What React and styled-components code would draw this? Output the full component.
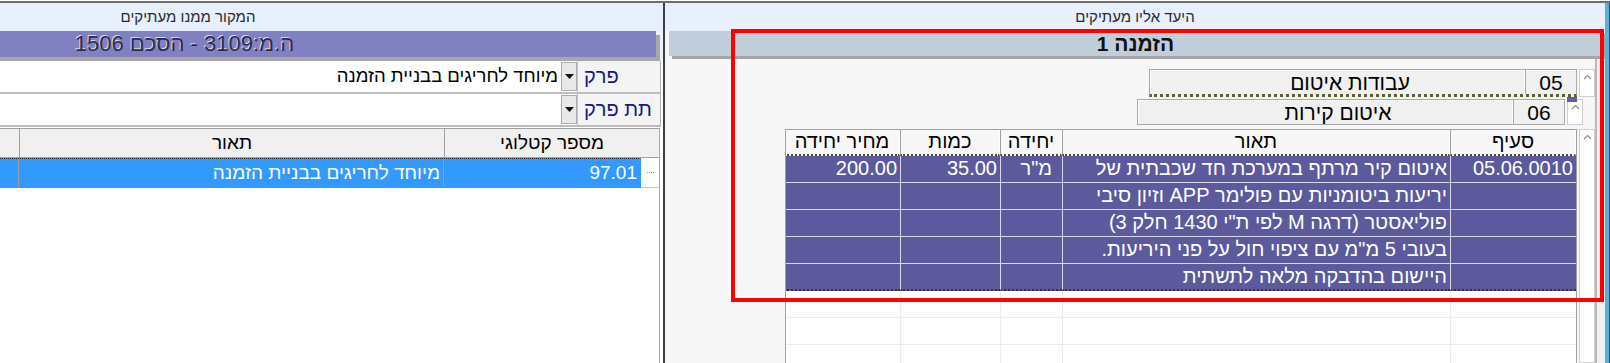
import React from 'react'
import styled, { createGlobalStyle } from 'styled-components'

const Global = createGlobalStyle`
  html, body {
    margin: 0;
    padding: 0;
    background: #fff;
  }
  body {
    font-family: "Liberation Sans", Arial, sans-serif;
  }
  * { box-sizing: border-box; }
`

const Screen = styled.div`
  position: relative;
  width: 1610px;
  height: 363px;
  overflow: hidden;
  background: #fff;
  direction: rtl;
`

const TopRule = styled.div`
  height: 3px;
  border-top: 1px solid #fff;
  background: #6e6e6e;
`

const Panels = styled.div`
  display: flex;
  height: 360px;
`

const EdgeStrip = styled.div`
  width: 5px;
  flex-shrink: 0;
  background: #57b2de;
  border-right: 1px solid #4a4a4a;
`

const Divider = styled.div`
  width: 2px;
  flex-shrink: 0;
  background: #3f3f3f;
`

/* ---------- source (left) panel ---------- */

const SourcePanel = styled.div`
  flex: 1;
  overflow: hidden;
  display: flex;
  flex-direction: column;
  align-items: flex-start;
  background: #fff;
`

const SourceInner = styled.div`
  width: 950px;
  flex-shrink: 0;
  height: 100%;
  display: flex;
  flex-direction: column;
`

const PanelTitle = styled.div`
  height: 28px;
  flex-shrink: 0;
  background: #e8effd;
  color: #2a2a2a;
  font-size: 15px;
  line-height: 28px;
  text-align: center;
`

const BarZone = styled.div`
  height: ${p => p.$h}px;
  flex-shrink: 0;
  background: ${p => p.$bg};
  padding-right: ${p => p.$right}px;
  padding-left: ${p => p.$left}px;
`

const SourceBar = styled.div`
  height: 26px;
  background: #8181c1;
  box-shadow: 4px 4px 0 #a8a8a8;
  color: #2c2c4a;
  font-size: 22px;
  line-height: 26px;
  text-align: center;
  text-shadow: -1px -1px 0 rgba(255, 255, 255, 0.7);
`

const FilterRow = styled.div`
  display: flex;
  height: 33px;
  flex-shrink: 0;
  border-bottom: 2px solid #bdbdbd;
  margin-right: 2px;
`

const FilterLabel = styled.div`
  width: 84px;
  flex-shrink: 0;
  background: #f4f4f4;
  border-left: 1px solid #c4c4c4;
  border-right: 1px solid #b0b0b0;
  color: #17177c;
  font-size: 20px;
  line-height: 30px;
  text-align: left;
  padding-left: 6px;
`

const ArrowButton = styled.div`
  width: 16px;
  flex-shrink: 0;
  margin: 1px 0;
  background: #e9e9e9;
  border: 1px solid #adadad;
  display: flex;
  align-items: center;
  justify-content: center;
`

const FilterInput = styled.div`
  flex: 1;
  background: #fff;
  font-size: 18.5px;
  line-height: 30px;
  color: #000;
  padding-right: 3px;
  text-align: right;
`

const SourceGrid = styled.div`
  flex: 1;
  margin-top: 1px;
  margin-right: 3px;
  border-right: 1px solid #a8a8a8;
  border-top: 1px solid #a0a0a0;
  background: #fff;
  display: flex;
  flex-direction: column;
`

const SourceHead = styled.div`
  display: grid;
  grid-template-columns: 215px 425px 1fr;
  height: 29px;
  background: #f0f0f0;
  border-bottom: 1px solid #a0a0a0;
`

const SourceHeadCell = styled.div`
  border-left: 1px solid #a0a0a0;
  font-size: 19px;
  line-height: 28px;
  text-align: center;
  color: #000;
`

const SourceRowWrap = styled.div`
  display: flex;
  height: 30px;
`

const RowGutter = styled.div`
  width: 18px;
  flex-shrink: 0;
  border-bottom: 1px solid #c4c4c4;
  display: flex;
  align-items: center;
  justify-content: center;
  &::before {
    content: '';
    width: 7px;
    border-top: 1px dotted #9a9a9a;
  }
`

const SourceRow = styled.div`
  flex: 1;
  display: grid;
  grid-template-columns: 197px 425px 1fr;
  background: #3399ff;
  border-top: 1px dotted #2a2a2a;
  border-bottom: 1px dotted #c47a30;
  border-right: 1px dotted #c47a30;
`

const SourceCell = styled.div`
  border-left: 1px solid #9a9aa8;
  color: #fff;
  font-size: 19px;
  line-height: 27px;
  padding-right: 3px;
  text-align: right;
  white-space: nowrap;
  overflow: hidden;
`

/* ---------- target (right) panel ---------- */

const TargetPanel = styled.div`
  width: 940px;
  flex-shrink: 0;
  display: flex;
  flex-direction: column;
  background: #f7f7f7;
`

const OrderBar = styled.div`
  height: 25px;
  background: #c0cdda;
  box-shadow: 3px 3px 0 #a6a6a6;
  color: #111;
  font-size: 21px;
  font-weight: bold;
  line-height: 25px;
  text-align: center;
`

const TargetBody = styled.div`
  flex: 1;
  display: flex;
  min-height: 0;
`

const Gutter = styled.div`
  width: 10px;
  flex-shrink: 0;
  background: #f1f1f1;
  border-left: 2px solid #b8b8b8;
`

const TargetMain = styled.div`
  flex: 1;
  display: flex;
  flex-direction: column;
  align-items: flex-start;
  padding-top: 10px;
  min-height: 0;
`

const LevelRow = styled.div`
  display: flex;
  gap: 2px;
  height: ${p => p.$h}px;
  margin-right: ${p => p.$indent}px;
  margin-bottom: ${p => p.$gap}px;
`

const ScrollStub = styled.div`
  width: 16px;
  flex-shrink: 0;
  background: #fff;
  border: 1px solid #cfcfcf;
  display: flex;
  justify-content: center;
  padding-top: 4px;
`

const LevelBox = styled.div`
  position: relative;
  width: 428px;
  display: flex;
  background: #f0f0f0;
  border: 1px solid #a9a9a9;
  box-shadow: inset 1px 1px 0 #fff;
  border-bottom: ${p => (p.$focused ? '3px dotted #5e5e2e' : '1px solid #a9a9a9')};

  &::after {
    content: '';
    display: ${p => (p.$focused ? 'block' : 'none')};
    position: absolute;
    right: -1px;
    bottom: -8px;
    width: 10px;
    height: 5px;
    background: #5f5fa8;
  }
`

const LevelNum = styled.div`
  width: 51px;
  flex-shrink: 0;
  border-left: 1px solid #a9a9a9;
  font-size: 21px;
  line-height: 25px;
  text-align: center;
`

const LevelName = styled.div`
  flex: 1;
  font-size: 21px;
  line-height: 25px;
  text-align: center;
  padding-left: 26px;
  border-right: 1px solid #fff;
`

const TableRow = styled.div`
  display: flex;
  gap: 2px;
  flex: 1;
  min-height: 0;
`

const Table = styled.div`
  width: 792px;
  display: grid;
  grid-template-columns: 126px 388px 62px 100px 116px;
  grid-template-rows: 26px;
  grid-auto-rows: 27px;
  align-content: start;
  background: #fff;
  border: 1px solid #a0a0a0;
  border-bottom: none;
  overflow: hidden;
`

const HeadCell = styled.div`
  background: #f7f7f7;
  border-left: 1px solid #a0a0a0;
  border-right: 1px solid #fff;
  border-bottom: 2px dotted #4b4b2b;
  font-size: 20px;
  line-height: 23px;
  text-align: center;
  color: #000;
  white-space: nowrap;
`

const Cell = styled.div`
  background: ${p => (p.$filled ? '#5c5a9c' : '#fff')};
  color: #fff;
  border-left: 1px solid ${p => (p.$filled ? '#d9d9ea' : '#ececec')};
  border-bottom: ${p =>
    p.$last ? '2px dotted #333' : `1px solid ${p.$filled ? '#d9d9ea' : '#ececec'}`};
  font-size: 20px;
  line-height: 25px;
  padding-right: ${p => p.$pad || 3}px;
  text-align: right;
  white-space: nowrap;
  overflow: hidden;
`

const Annotation = styled.div`
  position: absolute;
  left: 731px;
  top: 29px;
  width: 873px;
  height: 273px;
  border: 4px solid #ff0000;
  pointer-events: none;
`

const Chevron = () => (
  <svg width="9" height="6" viewBox="0 0 9 6">
    <polyline points="1,5 4.5,1.5 8,5" fill="none" stroke="#8c8c8c" strokeWidth="1.1" />
  </svg>
)

const DownArrow = () => (
  <svg width="9" height="5" viewBox="0 0 9 5">
    <polygon points="0,0 9,0 4.5,5" fill="#111" />
  </svg>
)

const lines = [
  { code: '05.06.0010', text: 'איטום קיר מרתף במערכת חד שכבתית של', unit: 'מ"ר', qty: '35.00', price: '200.00' },
  { text: 'יריעות ביטומניות עם פולימר APP וזיון סיבי' },
  { text: 'פוליאסטר (דרגה M לפי ת"י 1430 חלק 3)' },
  { text: 'בעובי 5 מ"מ עם ציפוי חול על פני היריעות.' },
  { text: 'היישום בהדבקה מלאה לתשתית' },
]

const columns = ['סעיף', 'תאור', 'יחידה', 'כמות', 'מחיר יחידה']

const App = () => (
  <>
    <Global />
    <Screen>
      <TopRule />
      <Panels>
        <EdgeStrip />
        <TargetPanel>
          <PanelTitle>היעד אליו מעתיקים</PanelTitle>
          <BarZone $h={28} $bg="#f7f7f7" $left={4} $right={3}>
            <OrderBar>הזמנה 1</OrderBar>
          </BarZone>
          <TargetBody>
            <Gutter />
            <TargetMain>
              <LevelRow $h={28} $indent={0} $gap={2}>
                <ScrollStub><Chevron /></ScrollStub>
                <LevelBox $focused>
                  <LevelNum>05</LevelNum>
                  <LevelName>עבודות איטום</LevelName>
                </LevelBox>
              </LevelRow>
              <LevelRow $h={26} $indent={12} $gap={4}>
                <ScrollStub><Chevron /></ScrollStub>
                <LevelBox>
                  <LevelNum>06</LevelNum>
                  <LevelName>איטום קירות</LevelName>
                </LevelBox>
              </LevelRow>
              <TableRow>
                <ScrollStub><Chevron /></ScrollStub>
                <Table>
                  {columns.map(c => (
                    <HeadCell key={c}>{c}</HeadCell>
                  ))}
                  {lines.map((l, i) => (
                    <React.Fragment key={i}>
                      <Cell $filled $last={i === lines.length - 1}>{l.code}</Cell>
                      <Cell $filled $last={i === lines.length - 1}>{l.text}</Cell>
                      <Cell $filled $last={i === lines.length - 1} $pad={10}>{l.unit}</Cell>
                      <Cell $filled $last={i === lines.length - 1}>{l.qty}</Cell>
                      <Cell $filled $last={i === lines.length - 1}>{l.price}</Cell>
                    </React.Fragment>
                  ))}
                  {Array.from({ length: 15 }).map((_, i) => (
                    <Cell key={'e' + i} />
                  ))}
                </Table>
              </TableRow>
            </TargetMain>
          </TargetBody>
        </TargetPanel>
        <Divider />
        <SourcePanel>
          <SourceInner>
            <PanelTitle>המקור ממנו מעתיקים</PanelTitle>
            <BarZone $h={30} $bg="#e8effd" $left={0} $right={7}>
              <SourceBar>ה.מ:3109 - הסכם 1506</SourceBar>
            </BarZone>
            <FilterRow>
              <FilterLabel>פרק</FilterLabel>
              <ArrowButton><DownArrow /></ArrowButton>
              <FilterInput>מיוחד לחריגים בבניית הזמנה</FilterInput>
            </FilterRow>
            <FilterRow>
              <FilterLabel>תת פרק</FilterLabel>
              <ArrowButton><DownArrow /></ArrowButton>
              <FilterInput />
            </FilterRow>
            <SourceGrid>
              <SourceHead>
                <SourceHeadCell>מספר קטלוגי</SourceHeadCell>
                <SourceHeadCell>תאור</SourceHeadCell>
                <SourceHeadCell />
              </SourceHead>
              <SourceRowWrap>
                <RowGutter />
                <SourceRow>
                  <SourceCell>97.01</SourceCell>
                  <SourceCell>מיוחד לחריגים בבניית הזמנה</SourceCell>
                  <SourceCell />
                </SourceRow>
              </SourceRowWrap>
            </SourceGrid>
          </SourceInner>
        </SourcePanel>
      </Panels>
      <Annotation />
    </Screen>
  </>
)

export default App
